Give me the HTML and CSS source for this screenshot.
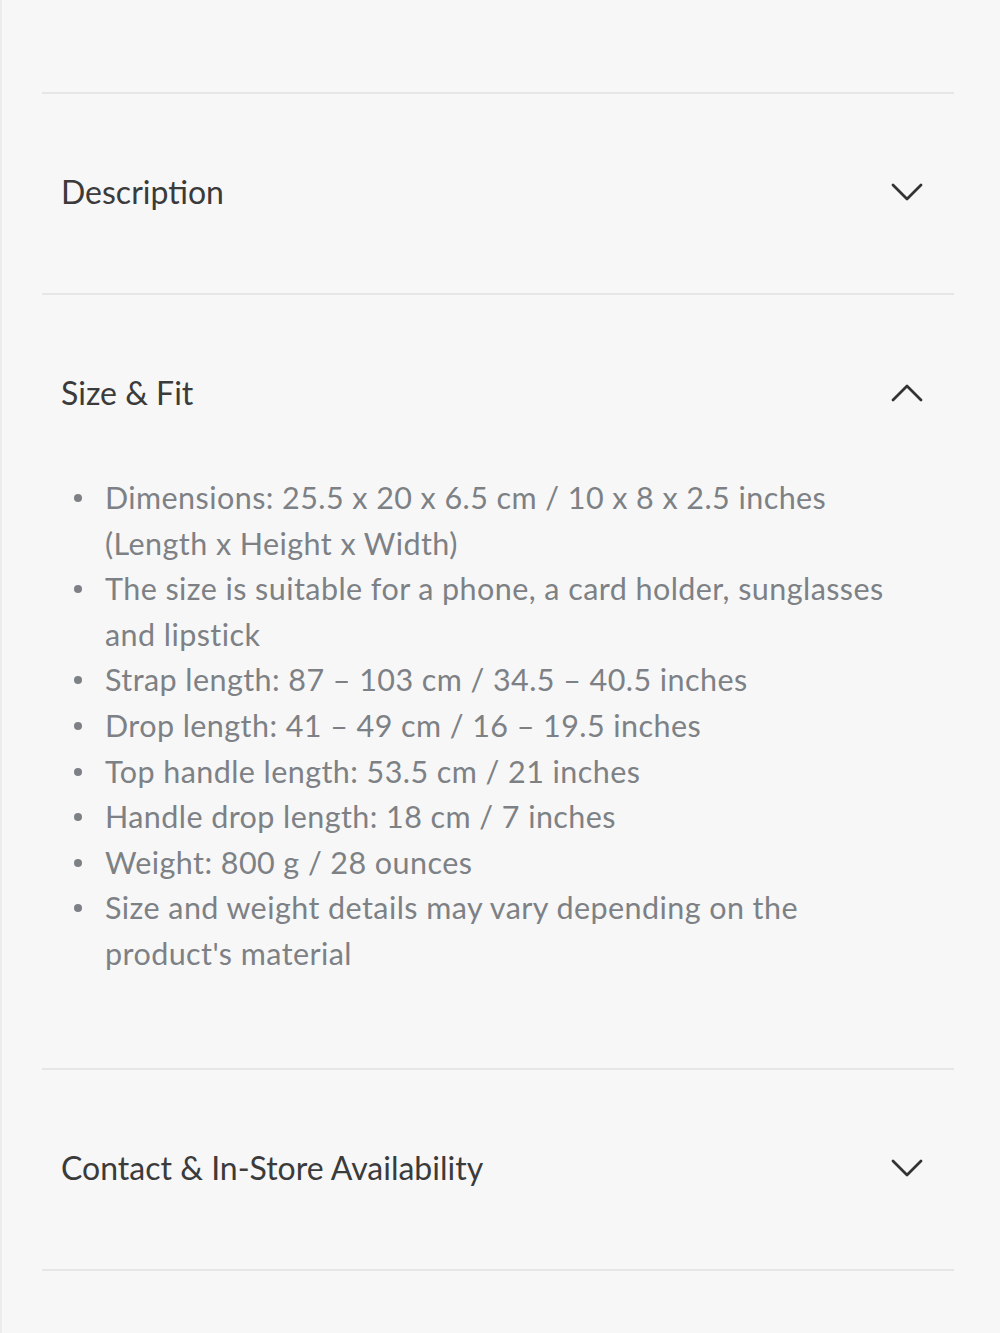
FILE: index.html
```html
<!DOCTYPE html>
<html lang="en">
<head>
<meta charset="utf-8">
<title>Product details</title>
<link rel="stylesheet" href="styles.css">
</head>
<body>
<div class="page">
  <section class="accordion">
    <div class="acc-item">
      <div class="acc-head">
        <span class="acc-title">Description</span>
        <svg class="chev" viewBox="0 0 32 18" width="32" height="18"><path d="M2 2 L16 16 L30 2"/></svg>
      </div>
    </div>
    <div class="acc-item open">
      <div class="acc-head">
        <span class="acc-title">Size &amp; Fit</span>
        <svg class="chev" viewBox="0 0 32 18" width="32" height="18"><path d="M2 16 L16 2 L30 16"/></svg>
      </div>
      <ul class="acc-list">
        <li>Dimensions: 25.5 x 20 x 6.5 cm / 10 x 8 x 2.5 inches (Length x Height x Width)</li>
        <li>The size is suitable for a phone, a card holder, sunglasses and lipstick</li>
        <li>Strap length: 87 – 103 cm / 34.5 – 40.5 inches</li>
        <li>Drop length: 41 – 49 cm / 16 – 19.5 inches</li>
        <li>Top handle length: 53.5 cm / 21 inches</li>
        <li>Handle drop length: 18 cm / 7 inches</li>
        <li>Weight: 800 g / 28 ounces</li>
        <li>Size and weight details may vary depending on the product's material</li>
      </ul>
    </div>
    <div class="acc-item">
      <div class="acc-head">
        <span class="acc-title">Contact &amp; In-Store Availability</span>
        <svg class="chev" viewBox="0 0 32 18" width="32" height="18"><path d="M2 2 L16 16 L30 2"/></svg>
      </div>
    </div>
  </section>
</div>
</body>
</html>
```
FILE: styles.css
```css
html, body {
  margin: 0;
  padding: 0;
  background: #f7f7f7;
}
body {
  font-family: "Lato", "Noto Sans", sans-serif;
  min-height: 1333px;
  border-left: 2px solid #ececec;
  box-sizing: border-box;
}
.page {
  padding: 92px 46px 0 40px;
}
.accordion {
  border-top: 2px solid #e6e6e6;
}
.acc-item {
  border-bottom: 2px solid #e6e6e6;
}
.acc-head {
  display: flex;
  align-items: center;
  justify-content: space-between;
  padding: 78px 31px 81px 19px;
  height: 40px;
}
.acc-item.open .acc-head {
  padding-bottom: 62px;
}
.acc-title {
  font-size: 32px;
  line-height: 40px;
  color: #3b3b3b;
}
.chev {
  display: block;
  fill: none;
  stroke: #333;
  stroke-width: 2.8;
  stroke-linecap: round;
  stroke-linejoin: round;
}
.acc-list {
  list-style: none;
  margin: 0;
  padding: 0 28px 91px 30px;
  font-size: 30.5px;
  letter-spacing: 0.43px;
  line-height: 45.6px;
  color: #7d8185;
}
.acc-list li {
  display: flex;
  align-items: flex-start;
}
.acc-list li::before {
  content: "";
  flex: none;
  width: 8px;
  height: 8px;
  border-radius: 50%;
  background: #7d8185;
  margin: 19px 23px 0 2px;
}
```
